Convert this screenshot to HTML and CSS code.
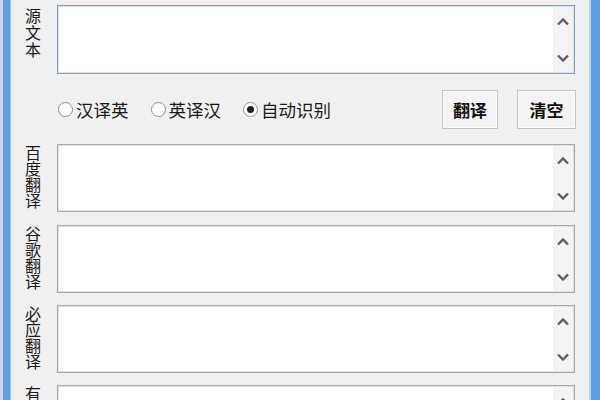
FILE: index.html
```html
<!DOCTYPE html>
<html lang="zh">
<head>
<meta charset="utf-8">
<title>翻译</title>
<link rel="stylesheet" href="styles.css">
</head>
<body>
<div class="edge edge-left"></div>
<div class="main">
  <div class="row row-src">
    <div class="label">源文本</div>
    <div class="box box-focus">
      <div class="area"></div>
      <div class="scroll">
        <svg class="chev" width="12" height="8" viewBox="0 0 12 8"><polyline points="1,6.5 6,1.5 11,6.5"/></svg>
        <svg class="chev" width="12" height="8" viewBox="0 0 12 8"><polyline points="1,1.5 6,6.5 11,1.5"/></svg>
      </div>
    </div>
  </div>
  <div class="controls">
    <label class="radio"><span class="circle"></span>汉译英</label>
    <label class="radio"><span class="circle"></span>英译汉</label>
    <label class="radio"><span class="circle on"></span>自动识别</label>
    <div class="buttons">
      <button class="btn btn-tr">翻译</button>
      <button class="btn btn-clr">清空</button>
    </div>
  </div>
  <div class="row row-out">
    <div class="label">百度翻译</div>
    <div class="box">
      <div class="area"></div>
      <div class="scroll">
        <svg class="chev" width="12" height="8" viewBox="0 0 12 8"><polyline points="1,6.5 6,1.5 11,6.5"/></svg>
        <svg class="chev" width="12" height="8" viewBox="0 0 12 8"><polyline points="1,1.5 6,6.5 11,1.5"/></svg>
      </div>
    </div>
  </div>
  <div class="row row-out gap13">
    <div class="label">谷歌翻译</div>
    <div class="box">
      <div class="area"></div>
      <div class="scroll">
        <svg class="chev" width="12" height="8" viewBox="0 0 12 8"><polyline points="1,6.5 6,1.5 11,6.5"/></svg>
        <svg class="chev" width="12" height="8" viewBox="0 0 12 8"><polyline points="1,1.5 6,6.5 11,1.5"/></svg>
      </div>
    </div>
  </div>
  <div class="row row-out gap12">
    <div class="label">必应翻译</div>
    <div class="box">
      <div class="area"></div>
      <div class="scroll">
        <svg class="chev" width="12" height="8" viewBox="0 0 12 8"><polyline points="1,6.5 6,1.5 11,6.5"/></svg>
        <svg class="chev" width="12" height="8" viewBox="0 0 12 8"><polyline points="1,1.5 6,6.5 11,1.5"/></svg>
      </div>
    </div>
  </div>
  <div class="row row-out gap12">
    <div class="label">有道翻译</div>
    <div class="box">
      <div class="area"></div>
      <div class="scroll">
        <svg class="chev" width="12" height="8" viewBox="0 0 12 8"><polyline points="1,6.5 6,1.5 11,6.5"/></svg>
        <svg class="chev" width="12" height="8" viewBox="0 0 12 8"><polyline points="1,1.5 6,6.5 11,1.5"/></svg>
      </div>
    </div>
  </div>
</div>
<div class="edge edge-right"></div>
</body>
</html>
```
FILE: styles.css
```css
html, body {
  margin: 0;
  padding: 0;
  height: 400px;
  overflow: hidden;
}
body {
  display: flex;
  background: #f0f0f0;
  font-family: "Noto Sans CJK SC", "Microsoft YaHei", sans-serif;
  color: #1a1a1a;
}
.edge {
  flex: none;
  height: 400px;
  background: #5f9fe6;
  box-sizing: border-box;
}
.edge-left {
  width: 11px;
  border-left: 3px solid #c9d9ea;
  border-right: 1px solid #9cc3ee;
}
.edge-right {
  width: 11px;
  border-left: 2px solid #b7d2ef;
}
.main {
  flex: 1;
  padding-top: 5px;
  display: flex;
  flex-direction: column;
}
.row {
  display: flex;
  flex: none;
}
.gap13 { margin-top: 13px; }
.gap12 { margin-top: 12px; }
.label {
  width: 46px;
  flex: none;
  box-sizing: border-box;
  padding-right: 15px;
  padding-top: 1px;
  writing-mode: vertical-rl;
  text-orientation: upright;
  font-size: 16px;
  line-height: 18px;
  color: #1c1c1c;
}
.row-src .label {
  letter-spacing: 1px;
  padding-top: 3px;
}
.box {
  width: 518px;
  box-sizing: border-box;
  border: 1px solid #a7a7a7;
  box-shadow: inset 0 0 0 1px #e2e2e2;
  background: #fff;
  display: flex;
  padding: 1px;
}
.box-focus {
  border-color: #7f9fbf;
  box-shadow: inset 0 0 0 1px #d4e2ef;
}
.row-src .box { height: 69px; }
.row-out .box { height: 68px; }
.area { flex: 1; background: #fff; }
.scroll {
  width: 20px;
  flex: none;
  background: #f3f3f3;
  display: flex;
  flex-direction: column;
  justify-content: space-between;
  align-items: center;
  padding: 11px 0 10px;
}
.chev polyline {
  fill: none;
  stroke: #5e5e5e;
  stroke-width: 2.4;
}
.controls {
  height: 70px;
  flex: none;
  display: flex;
  align-items: center;
  margin-left: 46px;
  width: 519px;
}
.radio {
  display: flex;
  align-items: center;
  font-size: 17.5px;
  margin-right: 21px;
  color: #1a1a1a;
}
.circle {
  width: 13px;
  height: 13px;
  border: 1.5px solid #8f8f8f;
  border-radius: 50%;
  background: #fff;
  margin-left: 1px;
  margin-right: 3px;
  position: relative;
  box-sizing: content-box;
}
.circle.on::after {
  content: "";
  position: absolute;
  left: 3px;
  top: 3px;
  width: 7px;
  height: 7px;
  border-radius: 50%;
  background: #222;
}
.buttons {
  margin-left: auto;
  display: flex;
  gap: 19px;
}
.btn {
  height: 39px;
  font-family: "Noto Sans CJK SC", sans-serif;
  font-weight: bold;
  font-size: 17px;
  color: #111;
  background: #f3f3f3;
  border: 1px solid #c3c3c3;
  box-shadow: inset 0 0 0 1px #fbfbfb;
  padding: 0;
}
.btn-tr { width: 56px; }
.btn-clr { width: 59px; }
```
